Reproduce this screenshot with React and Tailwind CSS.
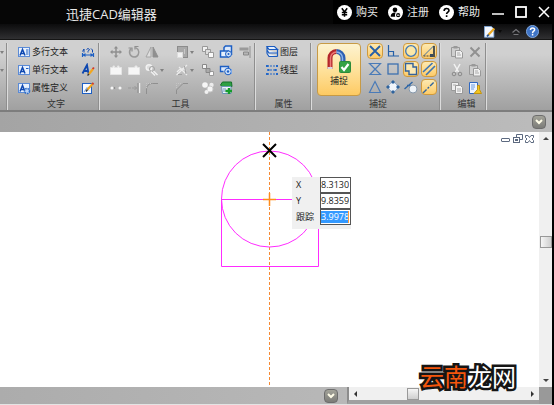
import React from 'react'

const blue = '#1d5fc4'
const gray = '#8f8f8f'

function Svg({ size = 'w-3.5 h-3.5', children }) {
  return (
    <svg viewBox="0 0 14 14" className={`${size} shrink-0`} fill="none" aria-hidden="true">
      {children}
    </svg>
  )
}

/* ---------- text group icons ---------- */

function TextFrame({ children }) {
  return (
    <Svg>
      <rect x="1.5" y="2.5" width="11" height="9" fill="#e8f1fd" stroke="#5b8bd6" />
      <path d="M3 10.5 5.5 4.5 8 10.5M4 8.5h3" stroke="#0d47b0" strokeWidth="1.5" />
      {children}
    </Svg>
  )
}

const MultiText = () => (
  <TextFrame>
    <path d="M9 5h2.5M9 7h2.5M9 9h2.5" stroke={blue} />
  </TextFrame>
)
const SingleText = () => (
  <TextFrame>
    <path d="M9 5.5h2.5" stroke={blue} />
  </TextFrame>
)
const AttrDef = () => (
  <TextFrame>
    <circle cx="10" cy="10" r="2.5" fill="#b9d2f5" stroke="#2f6dc8" strokeWidth="1.6" strokeDasharray="1.6 .8" />
  </TextFrame>
)
const FindText = () => (
  <Svg>
    <path d="M1.5 8v4M12.5 8v4M2 10h10" stroke={blue} strokeWidth="1.2" />
    <path d="M1.500 10 4.500 8v4zM12.500 10l-3-2v4z" fill={blue} />
    <path d="M1.5 6.500 3 4v3.500M5.500 4.500l1.500-1 1.500 1-1.500 2v1M10 3.500l1.500 1.500v2.500" stroke="#0d47b0" />
  </Svg>
)
const StyleText = () => (
  <Svg>
    <path d="M1.5 10.5 6 2l1.500 8.500M3 8h4.5" stroke="#0d47b0" strokeWidth="1.8" />
    <path d="m8 11 4-5" stroke="#f2a61d" strokeWidth="2.2" />
    <path d="m6.500 12.500 1.500-1.500" stroke="#333" strokeWidth="1.5" />
    <path d="m11.700 6 1.200-1.500" stroke="#d43a2a" strokeWidth="2" />
  </Svg>
)
const EditText = () => (
  <Svg>
    <rect x="1.5" y="2.5" width="9" height="10" fill="#f6faff" stroke={blue} />
    <path d="M3 11 6 6.5l2 3" stroke="#6e9ee0" />
    <path d="m6.500 8.500 5-5.500" stroke="#f2a61d" strokeWidth="2.2" />
    <path d="m5 10.500 1.500-2" stroke="#333" strokeWidth="1.5" />
    <path d="m11.300 3.200 1.200-1.200" stroke="#d43a2a" strokeWidth="2" />
  </Svg>
)

/* ---------- tool icons ---------- */

const Move = () => (
  <Svg>
    <path d="M7 2v10M2 7h10" stroke={gray} strokeWidth="1.5" />
    <path d="M7 1 4.800 3.500h4.400zM7 13l-2.200-2.500h4.400zM1 7l2.500-2.200v4.400zM13 7l-2.500-2.200v4.400z" fill={gray} />
  </Svg>
)
const Rotate = () => (
  <Svg>
    <path d="M4 3.500C1 7 3 12 7 12s6-4 4-7.500L8.500 2.500" stroke="#999" strokeWidth="1.500" />
    <path d="M1.500 3h3.500v3.500M11.500 1.500H8v3" stroke={gray} strokeWidth="1.200" />
  </Svg>
)
const Mirror = () => (
  <Svg>
    <path d="M6 2v10H1z" fill="#dedede" stroke="#a5a5a5" />
    <path d="M8 2v10h5z" fill={gray} stroke={gray} />
  </Svg>
)
const Scale = () => (
  <Svg>
    <rect x="2.5" y="1.5" width="10" height="11" fill="#a9a9a9" stroke="#8c8c8c" />
    <rect x="2.5" y="7.5" width="5" height="5" fill="#f2f2f2" stroke="#ddd" />
    <path d="M9.500 4v5" stroke="#c8c8c8" />
  </Svg>
)
const CopyShapes = () => (
  <Svg>
    <path d="M1.500 1.500h5v5h-5z" fill="#f2f2f2" stroke="#999" />
    <path d="M4.500 4.500h5v5h-5z" fill="#ddd" stroke="#999" />
    <path d="M7.500 7.500h5v5h-5z" fill="#fafafa" stroke="#999" />
  </Svg>
)
const BlueBlock = () => (
  <Svg>
    <path d="M5 6V2.500L6.500 1h6v9" fill="#dce9fb" stroke={blue} strokeWidth="1.5" />
    <path d="M1.5 6h8v6h-8z" fill="#e6f0fd" stroke={blue} strokeWidth="1.5" />
    <circle cx="9.5" cy="9" r="3" fill="#cfe1f9" stroke={blue} />
    <circle cx="9.5" cy="9" r="1" fill={blue} />
  </Svg>
)
const Align = () => (
  <Svg>
    <path d="M12 1v12" stroke={gray} />
    <path d="M1.500 2.500h9v3h-9z" fill="#999" />
    <path d="M5.500 7h5v3h-5z" fill="#b5b5b5" stroke="#888" />
  </Svg>
)
const Notch = () => (
  <Svg>
    <path d="M1.500 4.500H4V3h1.500v1.500h3V3H10v1.500h2.500v7h-11z" fill="#f6f6f6" stroke="#e4e4e4" />
  </Svg>
)
const Flat = () => (
  <Svg>
    <path d="M1.500 4.500H8V3h2v1.500h2.500v7h-11z" fill="#f6f6f6" stroke="#e4e4e4" />
  </Svg>
)
const Offset = () => (
  <Svg>
    <circle cx="4" cy="4.5" r="2.8" fill="#ddd" stroke="#f2f2f2" strokeWidth="1.500" />
    <circle cx="7" cy="6" r="2.5" stroke="#a2a2a2" />
    <path d="M6 8.500l4 4M8.500 8l4 4" stroke="#f0f0f0" strokeWidth="1.5" />
  </Svg>
)
const Explode = () => (
  <Svg>
    <path d="M1.500 12 12 2M4 4l8 8M2 9c3-4 7-4 9-1" stroke="#ececec" strokeWidth="1.3" />
    <path d="M3 11.500h4M9.500 3l1.500 8" stroke="#a0a0a0" />
  </Svg>
)
const Squares = () => (
  <Svg>
    <path d="M1.5 1.500h4v4h-4z" fill="#f5f5f5" stroke="#888" />
    <path d="M8.500 8.500h4v4h-4z" fill="#fafafa" stroke="#999" />
    <path d="M5 5.500h4v4H5z" fill="#aaa" stroke="#888" />
  </Svg>
)
const BlueRound = () => (
  <Svg>
    <path d="M4.500 8.500h-3v-5h8v2" fill="#dce9fb" stroke={blue} strokeWidth="1.4" />
    <circle cx="9" cy="8.5" r="3.3" fill="#cfe1f9" stroke={blue} />
    <circle cx="9" cy="8.5" r="1.2" fill={blue} />
    <path d="M12.500 6v5" stroke="#7aa7e6" />
  </Svg>
)
const Dots = () => (
  <Svg>
    <path d="M1 7h12" stroke="#bbb" />
    <circle cx="3" cy="7" r="1.500" fill="#f6f6f6" />
    <circle cx="11" cy="7" r="1.500" fill="#f6f6f6" />
    <circle cx="5.500" cy="7" r=".8" fill="#777" />
  </Svg>
)
const Extend = () => (
  <Svg>
    <path d="M12.500 2v10" stroke="#eee" strokeWidth="1.5" />
    <path d="M11 2v10" stroke="#888" />
    <path d="M1 7h3M5 7h5M7.500 5l2 2-2 2" stroke="#999" />
  </Svg>
)
const Fillet = () => (
  <Svg>
    <path d="M1.500 13V9c0-4 2-6.500 6-6.500h5.500" stroke="#8f8f8f" />
    <path d="M1.500 7V2.500H7" stroke="#c6c6c6" strokeDasharray="1 1" />
  </Svg>
)
const Chamfer = () => (
  <Svg>
    <path d="M1.500 13V9l6.500-6.500h5" stroke="#8f8f8f" />
    <path d="M1.500 7V2.500H7" stroke="#c6c6c6" strokeDasharray="1 1" />
  </Svg>
)
const Spheres = () => (
  <Svg>
    <circle cx="4" cy="4" r="2.8" fill="#f6f6f6" />
    <circle cx="10.5" cy="4" r="2.2" fill="#ececec" />
    <circle cx="9" cy="8" r="3" fill="#f6f6f6" stroke="#ccc" />
    <circle cx="5.500" cy="11" r="2" fill="#f0f0f0" />
  </Svg>
)
const Green = () => (
  <Svg>
    <path d="m1.500 4 2-3h9l.5 4.500H3z" fill="#2ea044" stroke="#14702a" />
    <path d="M2.500 5.500h9.500v7H3.500z" fill="#eef5fb" stroke="#6e94b8" />
    <path d="M4 8h3M4 10h3" stroke="#6e94b8" />
    <path d="M6.500 10h6.500M10 7v6" stroke="#159c2b" strokeWidth="2.4" />
  </Svg>
)

/* ---------- property icons ---------- */

const Layers = () => (
  <Svg>
    <path
      d="M2 1.500h7.500l3 3H4zM2 5l2 3h8.500M2 8.500l2 3h8.500M12.500 4.500v7M2 1.500v7"
      fill="#e4effd"
      stroke="#1a5bc0"
      strokeWidth="1.2"
    />
  </Svg>
)
const LineType = () => (
  <Svg>
    <path d="M2 3h10M2 7h10M2 11h10" stroke="#2468c9" strokeDasharray="2 1" />
    <path d="M1 2h2.500v2H1zM11 2h2v2h-2zM1 10h2.500v2H1zM11 10h2v2h-2zM2.500 6h2v2h-2zM9.500 6h2v2h-2z" fill="#2468c9" />
  </Svg>
)
const Magnet = () => (
  <svg viewBox="0 0 26 26" className="w-[26px] h-[26px]" fill="none" aria-hidden="true">
    <path d="M4 21V10a6.500 6.500 0 0 1 6.500-6.500" stroke="#b3262b" strokeWidth="5" />
    <path d="M10.500 3.500A6.500 6.500 0 0 1 17 10v8" stroke="#2e5fb2" strokeWidth="5" />
    <path d="M4.500 20V10a6 6 0 0 1 6-6" stroke="#ea7a78" strokeWidth="1.5" />
    <path d="M10.500 4a6 6 0 0 1 6 6v6" stroke="#8eb5ea" strokeWidth="1.5" />
    <path d="M1.500 20h5" stroke="#d8d8e0" strokeWidth="2" />
    <rect x="13.500" y="13.500" width="11" height="11" rx="1" fill="#35a244" stroke="#2b8a3a" />
    <path d="m15.500 19 2.500 3 4.500-6" stroke="#fff" strokeWidth="2.2" />
  </svg>
)

/* ---------- snap icons ---------- */

const snapLine = '#2560a8'
const snaps = [
  { name: '交点', on: true, art: <path d="m2 2 10 10M12 2 2 12" stroke={snapLine} strokeWidth="1.800" /> },
  { name: '垂足', art: <path d="M2.500 1v11H13M3 7.500h4.500V12" stroke={snapLine} strokeWidth="1.200" /> },
  { name: '圆心', on: true, art: <circle cx="7" cy="7" r="5.300" fill="#fbe7a8" stroke="#3e78b8" strokeWidth="1.300" /> },
  {
    name: '端点',
    on: true,
    art: (
      <>
        <path d="M12 1.500 1.500 12" stroke="#44719c" />
        <path d="M1.500 12H9" stroke="#444" strokeDasharray="2 1" />
        <path d="M12 2v11" stroke="#24313f" strokeWidth="1.600" />
        <path d="M8 10h3v3H8z" fill="#3b4b5b" />
      </>
    ),
  },
  { name: '中点', art: <path d="M1.500 1.500h11L2 12.500h10.500zM1.500 1.500l11 11" stroke="#4a7bb8" strokeWidth="1.200" /> },
  { name: '四边', art: <rect x="2" y="2" width="10" height="10" stroke="#3d70b0" strokeWidth="1.300" /> },
  { name: '插入点', on: true, art: <path d="M1.500 1.500h7.500v3.500h3.500v7.500H5V9H1.500z" fill="#fbe9b4" stroke="#32629c" strokeWidth="1.400" /> },
  { name: '平行', on: true, art: <path d="m1 10 9.500-9M4 13l9-9" stroke="#3d74b2" strokeWidth="1.600" /> },
  { name: '三角', art: <path d="M7 1.500 12.500 12.500h-11z" stroke="#4a7bb8" strokeWidth="1.200" /> },
  {
    name: '象限点',
    art: (
      <>
        <circle cx="7" cy="7" r="4.500" fill="#f1f5fa" stroke="#8ba6c6" />
        <path d="M7 0 9 2 7 4 5 2zM7 10l2 2-2 2-2-2zM0 7l2-2 2 2-2 2zM10 7l2-2 2 2-2 2z" fill="#2f639c" />
      </>
    ),
  },
  {
    name: '切点',
    art: (
      <>
        <circle cx="9" cy="9" r="4" fill="#eef3f8" stroke="#8798aa" />
        <path d="M.500 9 8.500 2M3 5.500h3.500" stroke="#2f66a6" strokeWidth="1.400" />
      </>
    ),
  },
  { name: '最近点', on: true, art: <path d="m1 13 12-12" stroke="#33669e" strokeWidth="1.400" strokeDasharray="5 1.500 2 1.500" /> },
]

/* ---------- edit icons ---------- */

const Paste = () => (
  <Svg>
    <path d="M1.500 2.500h8v9h-8z" fill="#cfcfcf" stroke="#999" />
    <path d="M3.500 1h4v2.500h-4z" fill="#999" />
    <path d="M5.500 5.500h5l2 2v5.500h-7z" fill="#f0f0f0" stroke="#999" />
    <path d="M7 8h3M7 10h4" stroke="#aaa" />
  </Svg>
)
const Delete = () => (
  <Svg>
    <path d="m2.500 2.500 9 9M11.500 2.500l-9 9" stroke="#919191" strokeWidth="2" />
  </Svg>
)
const Cut = () => (
  <Svg>
    <path d="m4 1 4.500 8M10 1 5.500 9" stroke="#f2f2f2" strokeWidth="1.5" />
    <circle cx="4" cy="11" r="1.800" stroke="#8a8a8a" />
    <circle cx="10" cy="11" r="1.800" stroke="#8a8a8a" />
  </Svg>
)
const CopyDoc = () => (
  <Svg>
    <path d="M1.500 1.500h7v8h-7z" fill="#eee" stroke="#999" />
    <path d="M5.500 4.500h5l2 2v6h-7z" fill="#f4f4f4" stroke="#999" />
    <path d="M3 4h3M7 8h4M7 10h4" stroke="#aaa" />
  </Svg>
)
const FormatBrush = () => (
  <Svg>
    <path d="M1.500 1.500h8v11h-8z" fill="#eef5ff" stroke="#2f68c0" />
    <path d="M3 4h4M3 6h4M3 8h3" stroke="#6b9ae0" />
    <path d="M9.500 4.500v4L6 12.500h7.500l-2-4v-4z" fill="#f3c51f" stroke="#c29410" />
  </Svg>
)

/* ---------- shared parts ---------- */

function Group({ title, className = '', children }) {
  return (
    <section className={`flex flex-col justify-between shrink-0 border-r border-[#8e8e8e] shadow-[1px_0_0_#dcdcdc] ${className}`}>
      {children}
      <h2 className="text-center text-[9px] leading-3 text-[#333]">{title}</h2>
    </section>
  )
}

const Caret = () => <span className="w-0 h-0 border-x-2 border-t-[3px] border-x-transparent border-t-[#808080]" />

function Tool({ label, icon, caret }) {
  return (
    <button type="button" aria-label={label} className="flex h-[18px] items-center gap-px pl-0.5">
      {icon}
      {caret && <Caret />}
    </button>
  )
}

function DropButton({ label }) {
  return (
    <button
      type="button"
      aria-label={label}
      className="flex w-3.5 h-3.5 shrink-0 items-center justify-center rounded-sm border border-[#6d6d6d] bg-linear-to-b from-[#a3a399] to-[#7c7c78]"
    >
      <svg viewBox="0 0 8 8" className="w-2 h-2" fill="none">
        <path d="m1 2 3 3 3-3" stroke="#fffde8" strokeWidth="2" />
      </svg>
    </button>
  )
}

const textTools = [
  { label: '多行文本', icon: <MultiText />, side: <FindText />, sideLabel: '查找' },
  { label: '单行文本', icon: <SingleText />, side: <StyleText />, sideLabel: '文字样式' },
  { label: '属性定义', icon: <AttrDef />, side: <EditText />, sideLabel: '编辑文字' },
]

const tools = [
  { label: '移动', icon: <Move /> },
  { label: '旋转', icon: <Rotate /> },
  { label: '镜像', icon: <Mirror /> },
  { label: '缩放', icon: <Scale />, caret: true },
  { label: '复制', icon: <CopyShapes /> },
  { label: '创建块', icon: <BlueBlock /> },
  { label: '对齐', icon: <Align /> },
  { label: '打断', icon: <Notch /> },
  { label: '打断于点', icon: <Flat /> },
  { label: '偏移', icon: <Offset />, caret: true },
  { label: '分解', icon: <Explode />, caret: true },
  { label: '阵列', icon: <Squares /> },
  { label: '插入块', icon: <BlueRound /> },
  null,
  { label: '修剪', icon: <Dots /> },
  { label: '延伸', icon: <Extend /> },
  { label: '圆角', icon: <Fillet /> },
  { label: '倒角', icon: <Chamfer /> },
  { label: '合并', icon: <Spheres /> },
  { label: '插入图像', icon: <Green /> },
]

const editTools = [
  { label: '粘贴', icon: <Paste /> },
  { label: '删除', icon: <Delete /> },
  { label: '剪切', icon: <Cut /> },
  { label: '选择性粘贴', icon: <Paste /> },
  { label: '复制', icon: <CopyDoc /> },
  { label: '格式刷', icon: <FormatBrush /> },
]

function Header() {
  const links = [
    { label: '购买', art: <path d="m4.500 3 2.500 3.500L9.500 3M7 6.500V11M4.500 7h5M4.500 9h5" stroke="#000" strokeWidth="1.4" /> },
    {
      label: '注册',
      art: (
        <>
          <circle cx="6.500" cy="4.500" r="2.200" fill="#000" />
          <path d="M2.500 11c0-3 2-4 4-4s3 1 3 4z" fill="#000" />
          <circle cx="9.500" cy="9.500" r="2.500" fill="#000" stroke="#fff" />
          <path d="M8.300 9.500h2.400" stroke="#fff" />
        </>
      ),
    },
    {
      label: '帮助',
      art: <path d="M4.800 5.500c0-3 4.500-3 4.500-.3 0 1.500-2.200 1.500-2.200 3.300M7.100 9.500v1.700" stroke="#000" strokeWidth="1.5" />,
    },
  ]
  return (
    <header className="bg-[#060606] text-[#e8e8e8]">
      <div className="flex h-6 items-center justify-between">
        <h1 className="pl-[66px] pt-1 text-[13px] leading-5">迅捷CAD编辑器</h1>
        <div className="flex h-full items-center bg-black pl-1 pr-0.5">
          {links.map((l) => (
            <a key={l.label} href="#" className="flex w-[51px] items-center gap-1 text-[11px] leading-6">
              <svg viewBox="0 0 14 14" className="w-[15px] h-[15px]" fill="none">
                <circle cx="7" cy="7" r="7" fill="#fff" />
                {l.art}
              </svg>
              {l.label}
            </a>
          ))}
          <div className="flex items-center gap-[11px] pl-0.5">
            <button type="button" aria-label="最小化">
              <svg viewBox="0 0 12 12" className="w-3 h-3">
                <path d="M0 8h12" stroke="#fff" strokeWidth="1.5" />
              </svg>
            </button>
            <button type="button" aria-label="最大化">
              <svg viewBox="0 0 12 12" className="w-3 h-3" fill="none">
                <rect x="1" y="1" width="10" height="10" stroke="#fff" strokeWidth="1.8" />
              </svg>
            </button>
            <button type="button" aria-label="关闭">
              <svg viewBox="0 0 12 12" className="w-3 h-3">
                <path d="m1 1 10 10M11 1 1 11" stroke="#fff" strokeWidth="1.5" />
              </svg>
            </button>
          </div>
        </div>
      </div>
      <div className="flex h-[15px] items-center justify-end gap-[5px] bg-linear-to-b from-[#0c0c0d] to-[#303032] pr-[13px]">
        <button type="button" aria-label="样式" className="flex items-center gap-0.5">
          <Svg size="w-3 h-3">
            <path d="M.500.500h8l3 3v9.500H.500z" fill="#f4f8ff" stroke="#7faae0" />
            <path d="m5 10.500 7-7.500" stroke="#e9a622" strokeWidth="2.5" />
            <path d="m3.500 12 2-2" stroke="#24508f" strokeWidth="2" />
          </Svg>
          <span className="w-0 h-0 border-x-2 border-t-[3px] border-x-transparent border-t-[#0a0a0a]" />
        </button>
        <button type="button" aria-label="收起" className="ml-1">
          <svg viewBox="0 0 10 8" className="w-2.5 h-2" fill="none">
            <path d="m1.500 4.500 3.500-3 3.500 3M2.500 6.500h5" stroke="#77777b" strokeWidth="1.2" />
          </svg>
        </button>
        <button type="button" aria-label="帮助">
          <svg viewBox="0 0 14 14" className="w-[13px] h-[13px]" fill="none">
            <circle cx="7" cy="7" r="6.500" fill="#3f74c6" stroke="#86aee6" />
            <path d="M4.800 5.500c0-3 4.500-3 4.500-.3 0 1.500-2.200 1.500-2.200 3.300M7.100 9.500v1.700" stroke="#fff" strokeWidth="1.6" />
          </svg>
        </button>
      </div>
    </header>
  )
}

function Ribbon() {
  return (
    <div className="flex h-[73px] overflow-hidden border-t border-[#151515] border-b-2 border-b-[#7d7d7d] bg-linear-to-b from-[#d0d0d0] from-20% to-[#a0a0a0] pt-[3px] text-[9px] leading-[18px] text-[#222]">
      <div className="flex w-[7px] flex-col border-r border-[#8e8e8e] shadow-[1px_0_0_#dcdcdc]">
        {[0, 1].map((i) => (
          <span key={i} className="flex h-[18px] items-center">
            <Caret />
          </span>
        ))}
      </div>

      <Group title="文字" className="w-[92px] pl-2.5 pr-[3px]">
        <div>
          {textTools.map((t) => (
            <div key={t.label} className="flex justify-between">
              <button type="button" className="flex h-[18px] items-center gap-px">
                {t.icon}
                {t.label}
              </button>
              <button type="button" aria-label={t.sideLabel}>
                {t.side}
              </button>
            </div>
          ))}
        </div>
      </Group>

      <Group title="工具" className="w-[156px] pl-2">
        <div className="grid grid-cols-[18px_18px_30px_26px_18px_19px_18px]">
          {tools.map((t, i) => (t ? <Tool key={i} {...t} /> : <span key={i} />))}
        </div>
      </Group>

      <Group title="属性" className="w-14 pl-2.5 pr-2">
        <div className="grow">
          <button type="button" className="flex h-[18px] items-center gap-px">
            <Layers />
            图层
          </button>
          <button type="button" className="flex h-[18px] items-center gap-px">
            <LineType />
            线型
          </button>
        </div>
      </Group>

      <Group title="捕捉" className="w-[129px] pl-1.5">
        <div className="flex gap-1.5">
          <button
            type="button"
            className="flex h-[53px] w-11 flex-col items-center justify-between rounded-sm border border-[#c79a45] bg-linear-to-b from-[#fdf3d0] via-[#fee29c] to-[#fdca62] pt-1 pb-2"
          >
            <Magnet />
            <span className="leading-3">捕捉</span>
          </button>
          <div className="grid grid-cols-[18px_18px_18px_18px] gap-y-0.5 self-start">
            {snaps.map((s) => (
              <button
                key={s.name}
                type="button"
                aria-label={s.name}
                aria-pressed={!!s.on}
                className={
                  s.on
                    ? 'flex w-4 h-4 items-center justify-center rounded-sm border border-[#d09a3c] bg-linear-to-b from-[#fde9b0] to-[#fdcb68]'
                    : 'flex w-4 h-4 items-center justify-center'
                }
              >
                <Svg>{s.art}</Svg>
              </button>
            ))}
          </div>
        </div>
      </Group>

      <Group title="编辑" className="w-[46px] pl-2">
        <div className="grid grid-cols-[18px_18px]">
          {editTools.map((t) => (
            <Tool key={t.label} {...t} />
          ))}
        </div>
      </Group>
    </div>
  )
}

function CoordPanel() {
  const rows = [
    { id: 'x', label: 'X', value: '8.3130' },
    { id: 'y', label: 'Y', value: '9.8359' },
    { id: 'track', label: '跟踪', value: '3.9978', selected: true },
  ]
  return (
    <form className="absolute left-[292px] top-[45px] w-[59px] bg-[#f0f0f0] pb-1">
      {rows.map((r) => (
        <div key={r.id} className="flex h-4 items-center justify-between pl-1">
          <label htmlFor={r.id} className="text-[9px] leading-4 text-[#222]">
            {r.label}
          </label>
          <span className="flex h-4 w-[31px] items-center border border-[#555] bg-white">
            <input
              id={r.id}
              defaultValue={r.value}
              className={
                r.selected
                  ? 'h-3 w-[28px] border-r border-[#ff9a3c] bg-[#3399ff] text-[9px] text-white outline-none'
                  : 'h-3 w-[28px] text-[9px] text-[#222] outline-none'
              }
            />
          </span>
        </div>
      ))}
    </form>
  )
}

function Canvas() {
  return (
    <main className="relative grow overflow-hidden bg-white">
      <svg className="absolute inset-0 w-full h-full" fill="none">
        <path d="M269.500 0v255" stroke="#f58a33" strokeDasharray="3 2" />
        <g stroke="#ff2cff">
          <circle cx="269.500" cy="67" r="48" />
          <path d="M221.500 67.500h97v67h-97z" />
        </g>
        <path d="M263 67.500h13M269.500 61v13" stroke="#ff8c1a" strokeWidth="1.5" />
        <path d="m263 12 13 13M276 12l-13 13" stroke="#000" strokeWidth="2" />
      </svg>
      <CoordPanel />
      {/* document window buttons */}
      <div className="absolute right-1 top-0.5 flex items-center gap-0.5">
        <button type="button" aria-label="最小化文档">
          <svg viewBox="0 0 10 10" className="w-2.5 h-2.5" fill="none">
            <rect x=".500" y="4.500" width="8" height="3" rx=".500" stroke="#5d6a80" />
          </svg>
        </button>
        <button type="button" aria-label="还原文档">
          <svg viewBox="0 0 10 10" className="w-2.5 h-2.5" fill="none" stroke="#5d6a80">
            <path d="M3.500 3V.500h6v5H7" />
            <rect x=".500" y="3.500" width="6" height="5" />
            <rect x="2.500" y="5.500" width="2" height="1" />
          </svg>
        </button>
        <button type="button" aria-label="关闭文档">
          <svg viewBox="0 0 10 10" className="w-2.5 h-2.5" fill="none">
            <path d="M.500 1.500h2.500l1.500 2 1.500-2h2.500v2L7 5l1.500 1.500v2H6l-1.500-2-1.500 2H.500v-2L2 5 .500 3.500z" stroke="#5d6a80" />
          </svg>
        </button>
      </div>
    </main>
  )
}

function Watermark() {
  return (
    <p className="absolute bottom-3 right-9 text-[24px] leading-8 [-webkit-text-stroke:5px_#151515] [paint-order:stroke_fill]">
      <span className="text-[#f4560c]">云南</span>
      <span className="text-white">龙网</span>
    </p>
  )
}

export default function App() {
  return (
    <div className="relative flex min-h-screen flex-col border-r-2 border-black bg-[#b4b4b4] font-['Open_Sans','Noto_Sans_CJK_SC',sans-serif]">
      <Header />
      <Ribbon />
      <div className="flex h-5 items-center justify-end bg-linear-to-r from-[#a4a4a4] to-[#bcbcbc] pr-1.5">
        <DropButton label="文档列表" />
      </div>

      <div className="flex grow">
        <Canvas />
        <div className="flex w-[13px] flex-col items-center justify-between bg-[#f0f0f0] py-[5px]">
          <span className="w-0 h-0 border-x-[3px] border-b-[3px] border-x-transparent border-b-[#444]" />
          <span className="mt-[-36px] w-3 h-3 border border-[#999] bg-linear-to-r from-[#f6f6f6] to-[#cfcfcf]" />
          <span className="w-0 h-0 border-x-[3px] border-t-[3px] border-x-transparent border-t-[#444]" />
        </div>
      </div>

      <footer className="flex h-[18px] border-b border-[#e4e4e4]">
        <div className="flex w-[347px] items-center justify-end bg-linear-to-r from-[#acacac] to-[#b8b8b8] pr-[9px]">
          <DropButton label="布局列表" />
        </div>
        <div className="flex grow items-center justify-between border-b-4 border-l-2 border-b-[#a0a0a0] border-l-[#8c8c8c] bg-[#f0f0f0] px-[5px]">
          <span className="w-0 h-0 border-y-[3px] border-r-[3px] border-y-transparent border-r-[#333]" />
          <span className="mr-[62px] w-3 h-3 border border-[#999] bg-linear-to-b from-[#f6f6f6] to-[#cfcfcf]" />
          <span className="w-0 h-0 border-y-[3px] border-l-[3px] border-y-transparent border-l-[#333]" />
        </div>
        <div className="w-[13px] bg-[#999]" />
      </footer>
      <Watermark />
    </div>
  )
}
